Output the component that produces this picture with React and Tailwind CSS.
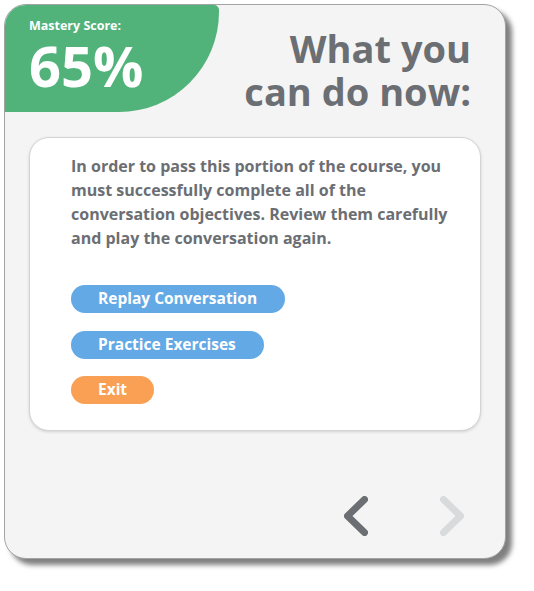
import React from "react";

function Chevron({ dir, color }) {
  const d = dir === "left" ? "M20.5 3.5 L3.5 20 L20.5 36.5" : "M3.5 3.5 L20.5 20 L3.5 36.5";
  return (
    <svg width="24" height="40" viewBox="0 0 24 40" fill="none">
      <path d={d} stroke={color} strokeWidth="7" strokeLinecap="round" strokeLinejoin="round" />
    </svg>
  );
}

export default function App() {
  const font = { fontFamily: "'Open Sans', 'Noto Sans', sans-serif" };
  return (
    <div className="w-[534px] h-[591px] bg-white pl-[4px] pt-[4px]" style={font}>
      <div className="relative w-[502px] h-[555px] rounded-[22px] border border-[#a3a3a3] bg-[#f4f4f4] shadow-[6px_6px_5px_rgba(0,0,0,0.5)] overflow-hidden flex flex-col">
        <div className="flex justify-between items-start h-[111px]">
          <div className="w-[214px] h-[107px] bg-[#51b27a] rounded-tr-[5px] rounded-br-[100px] pl-[24px] pt-[13px] text-white">
            <div className="text-[12.5px] font-bold leading-[16px]">Mastery Score:</div>
            <div className="text-[56px] font-bold leading-[60px] mt-[1px]">65%</div>
          </div>
          <div className="pr-[34px] pt-[22px] text-right text-[38px] font-bold leading-[43px] text-[#6b6e73]">
            <div>What you</div>
            <div>can do now:</div>
          </div>
        </div>
        <div className="mx-[24px] mt-[21px] h-[294px] rounded-[20px] bg-white border border-[#d4d4d4] shadow-[0_1px_3px_rgba(0,0,0,0.15)] pl-[41px] pr-[20px] pt-[16px]">
          <p className="text-[16px] font-bold leading-[24px] text-[#6b6e73] whitespace-nowrap">
            In order to pass this portion of the course, you
            <br />
            must successfully complete all of the
            <br />
            conversation objectives. Review them carefully
            <br />
            and play the conversation again.
          </p>
          <div className="mt-[35px] flex flex-col items-start gap-[17.5px]">
            <button className="w-[214px] h-[28px] pl-[27px] text-left rounded-full bg-[#63a9e6] text-white text-[15.5px] font-bold">Replay Conversation</button>
            <button className="w-[193px] h-[28px] pl-[27px] text-left rounded-full bg-[#63a9e6] text-white text-[15.5px] font-bold">Practice Exercises</button>
            <button className="w-[83px] h-[28px] pl-[27px] text-left rounded-full bg-[#f9a054] text-white text-[15.5px] font-bold">Exit</button>
          </div>
        </div>
        <div className="flex-1" />
        <div className="flex justify-end gap-[72px] pr-[41px] pb-[22px]">
          <Chevron dir="left" color="#6b6e73" />
          <Chevron dir="right" color="#d9dadc" />
        </div>
      </div>
    </div>
  );
}
